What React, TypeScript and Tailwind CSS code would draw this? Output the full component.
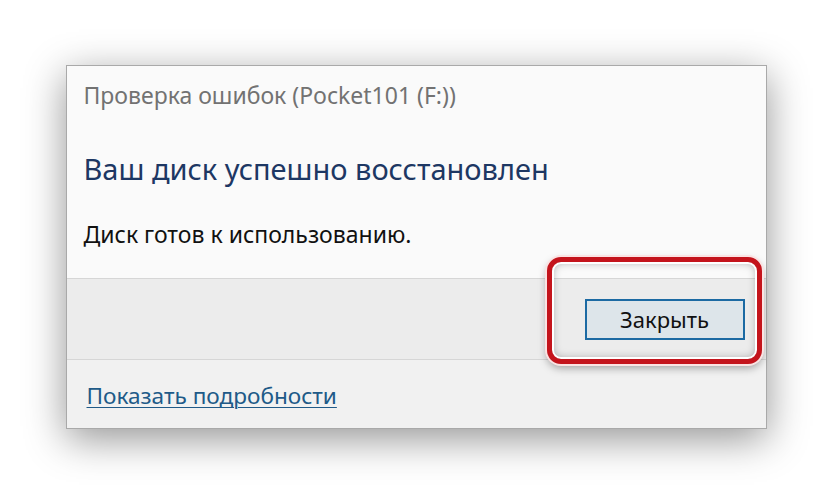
export default function App() {
  return (
    <div className="min-h-[496px] w-[832px] bg-white pt-[65px] font-['Noto_Sans','Open_Sans',sans-serif]">
      <div className="relative mx-auto w-[701px] border border-[#a9a9a9] bg-[#fafafa] shadow-[0_10px_38px_rgba(0,0,0,0.42)]">
        <section className="px-[17px] pt-[14px] pb-[29px]">
          <p className="text-[23px] leading-[30px] text-[#727272]">Проверка ошибок (Pocket101 (F:))</p>
          <h1 className="mt-[39px] text-[29px] leading-[40px] text-[#1d3763]">Ваш диск успешно восстановлен</h1>
          <p className="mt-[30px] text-[23px] leading-[30px] text-[#111]">Диск готов к использованию.</p>
        </section>
        <div className="flex h-[82px] items-center justify-end border-y border-[#d6d6d6] bg-[#ececec] pr-[21px]">
          <button className="h-[41px] w-[160px] border-2 border-[#1c6aa3] bg-[#dde5ea] text-[22px] leading-none text-[#111]">
            Закрыть
          </button>
        </div>
        <div className="h-[68px] bg-[#f1f1f1] px-[20px] pt-[21px]">
          <a className="text-[22.6px] leading-[30px] text-[#205a88] underline decoration-1 underline-offset-[3px]">
            Показать подробности
          </a>
        </div>
        <div className="pointer-events-none absolute left-[480px] top-[191px] h-[107px] w-[215px] rounded-[14px] border-[5px] border-[#c4141c] shadow-[inset_0_0_0_2px_#fff,inset_0_0_10px_rgba(0,0,0,0.35),0_0_0_2px_#fbe3e3,0_4px_8px_rgba(0,0,0,0.35)]" />
      </div>
    </div>
  );
}
